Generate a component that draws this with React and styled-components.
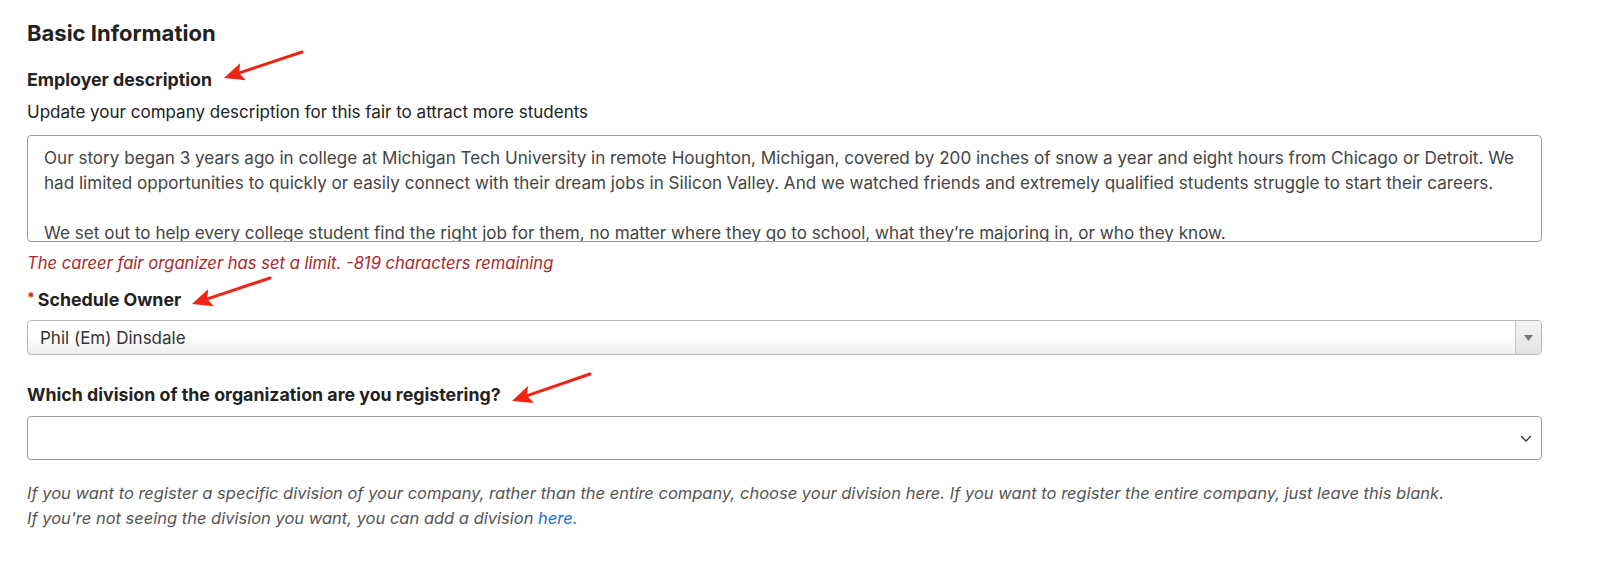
import React from "react";
import styled, { createGlobalStyle } from "styled-components";

const Global = createGlobalStyle`
  html, body { margin: 0; padding: 0; background: #fff; }
  body { font-family: Inter, "Noto Sans", "Liberation Sans", sans-serif; color: #222; }
`;

const Page = styled.div`
  position: relative;
  width: 1600px;
  height: 565px;
  box-sizing: border-box;
  padding: 20px 58px 0 27px;
  overflow: hidden;
`;

const Title = styled.h2`
  margin: 0;
  font-size: 22px;
  font-weight: 700;
  line-height: 26px;
  color: #222;
`;

const Label = styled.div`
  margin-top: ${(p) => p.$mt || 0}px;
  font-size: 17.8px;
  font-weight: 700;
  line-height: 22px;
  color: #222;
`;

const Star = styled.span`
  color: #c0282d;
  font-size: 14px;
  margin-right: 3px;
  vertical-align: 3px;
`;

const Help = styled.div`
  margin-top: ${(p) => p.$mt || 0}px;
  font-size: 17px;
  line-height: 22px;
  color: #222;
`;

const TextBox = styled.div`
  margin-top: 12px;
  height: 107px;
  box-sizing: border-box;
  border: 1px solid #9a9a9a;
  border-radius: 4px;
  padding: 9px 16px 0 16px;
  overflow: hidden;
  font-size: 17.1px;
  line-height: 25px;
  color: #444;
`;

const Line = styled.div`
  white-space: nowrap;
  min-height: 25px;
`;

const Error = styled.div`
  margin-top: 10px;
  font-size: 16.6px;
  font-style: italic;
  line-height: 22px;
  color: #a8282c;
`;

const Select = styled.div`
  margin-top: ${(p) => p.$mt || 0}px;
  height: ${(p) => p.$h}px;
  box-sizing: border-box;
  display: flex;
  align-items: center;
  border: 1px solid ${(p) => (p.$legacy ? "#b9b9b9" : "#9a9a9a")};
  border-radius: 4px;
  background: ${(p) => (p.$legacy ? "linear-gradient(#ffffff 45%, #eeeeee)" : "#fff")};
  overflow: hidden;
`;

const SelectValue = styled.div`
  flex: 1;
  padding-left: 12px;
  font-size: 17px;
  color: #333;
`;

const ArrowBox = styled.div`
  width: 25px;
  height: 100%;
  display: flex;
  align-items: center;
  justify-content: center;
  border-left: 1px solid #c8c8c8;
  background: linear-gradient(#f4f4f4, #e2e2e2);
`;

const Chevron = styled.div`
  width: 30px;
  display: flex;
  align-items: center;
  justify-content: center;
`;

const Note = styled.div`
  margin-top: ${(p) => p.$mt || 0}px;
  font-size: 16.5px;
  font-style: italic;
  line-height: 25px;
  color: #555;
`;

const Link = styled.a`
  color: #1a6fd8;
  text-decoration: none;
`;

const Arrow = styled.svg`
  position: absolute;
  left: ${(p) => p.$x}px;
  top: ${(p) => p.$y}px;
  overflow: visible;
`;

function RedArrow({ x, y, dx, dy }) {
  const len = Math.hypot(dx, dy);
  const ux = dx / len;
  const uy = dy / len;
  const hl = 20;
  const hw = 9;
  const bx = dx - ux * hl;
  const by = dy - uy * hl;
  const px = -uy * hw;
  const py = ux * hw;
  return (
    <Arrow $x={x} $y={y} width="1" height="1">
      <line x1="0" y1="0" x2={bx + ux * 3} y2={by + uy * 3} stroke="#f02414" strokeWidth="3" strokeLinecap="round" />
      <polygon points={`${dx},${dy} ${bx + px},${by + py} ${bx + ux * 4},${by + uy * 4} ${bx - px},${by - py}`} fill="#f02414" />
    </Arrow>
  );
}

export default function App() {
  return (
    <>
      <Global />
      <Page>
        <Title>Basic Information</Title>
        <Label $mt={23}>Employer description</Label>
        <Help $mt={10}>Update your company description for this fair to attract more students</Help>
        <TextBox>
          <Line>
            Our story began 3 years ago in college at Michigan Tech University in remote Houghton, Michigan, covered by 200 inches of snow a year and eight hours from Chicago or Detroit. We
          </Line>
          <Line>
            had limited opportunities to quickly or easily connect with their dream jobs in Silicon Valley. And we watched friends and extremely qualified students struggle to start their careers.
          </Line>
          <Line />
          <Line>
            We set out to help every college student find the right job for them, no matter where they go to school, what they’re majoring in, or who they know.
          </Line>
        </TextBox>
        <Error>The career fair organizer has set a limit. -819 characters remaining</Error>
        <Label $mt={13}>
          <Star>*</Star>Schedule Owner
        </Label>
        <Select $mt={9} $h={35} $legacy>
          <SelectValue>Phil (Em) Dinsdale</SelectValue>
          <ArrowBox>
            <svg width="9" height="6" viewBox="0 0 9 6">
              <polygon points="0,0 9,0 4.5,6" fill="#777" />
            </svg>
          </ArrowBox>
        </Select>
        <Label $mt={29}>Which division of the organization are you registering?</Label>
        <Select $mt={10} $h={44}>
          <SelectValue />
          <Chevron>
            <svg width="12" height="7" viewBox="0 0 12 7">
              <polyline points="1,1 6,6 11,1" fill="none" stroke="#333" strokeWidth="1.3" />
            </svg>
          </Chevron>
        </Select>
        <Note $mt={21}>
          If you want to register a specific division of your company, rather than the entire company, choose your division here. If you want to register the entire company, just leave this blank.
        </Note>
        <Note>
          If you're not seeing the division you want, you can add a division <Link href="#">here.</Link>
        </Note>
        <RedArrow x={302} y={52} dx={-78} dy={26} />
        <RedArrow x={270} y={278} dx={-78} dy={26} />
        <RedArrow x={590} y={374} dx={-78} dy={27} />
      </Page>
    </>
  );
}
